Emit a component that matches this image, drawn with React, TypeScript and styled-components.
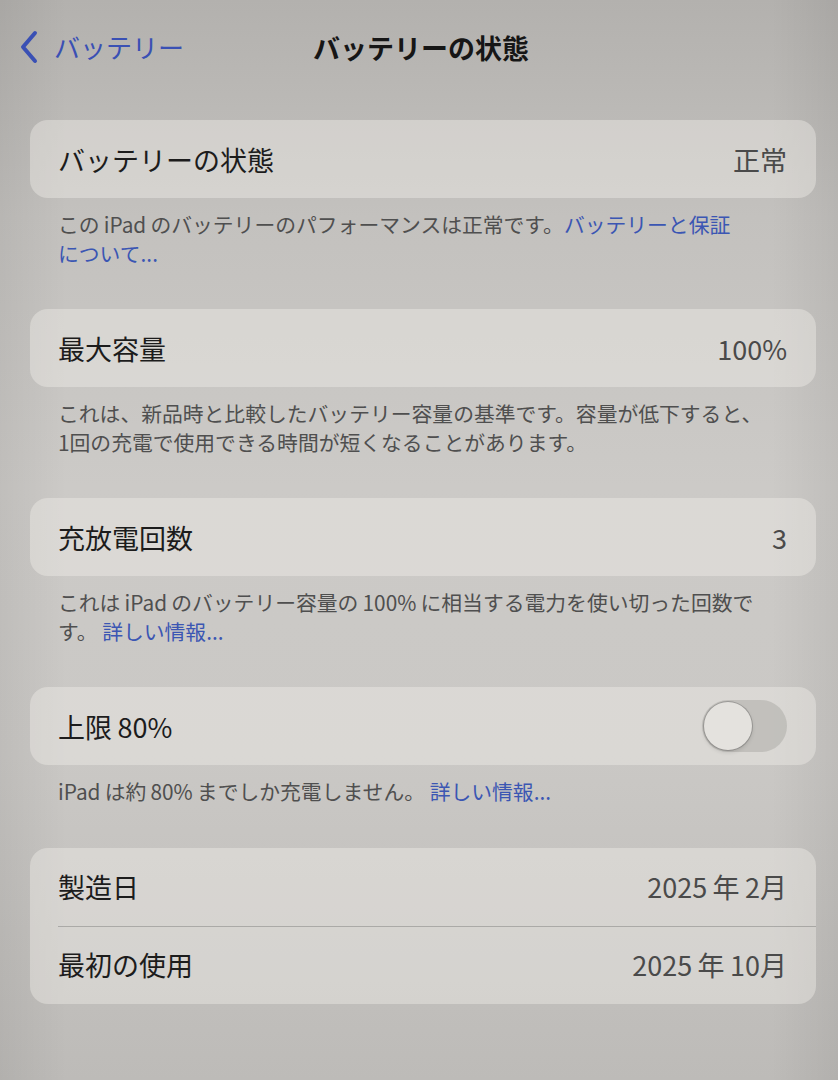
import React, { useState } from "react";
import styled, { createGlobalStyle } from "styled-components";

const GlobalStyle = createGlobalStyle`
  html, body {
    margin: 0;
    padding: 0;
  }
  body {
    font-family: "Noto Sans CJK JP", "Noto Sans", "Liberation Sans", sans-serif;
    background: #c4c2bf;
  }
`;

const Screen = styled.div`
  min-height: 1080px;
  background:
    linear-gradient(90deg, rgba(0, 0, 0, 0.06) 0%, rgba(0, 0, 0, 0) 8%, rgba(0, 0, 0, 0) 92%, rgba(0, 0, 0, 0.06) 100%),
    linear-gradient(180deg, #b3b1ae 0%, #c3c1be 20%, #cccac7 45%, #cac8c5 70%, #bdbbb8 100%);
  padding: 0 22px 0 30px;
  box-sizing: border-box;
`;

const NavBar = styled.div`
  height: 120px;
  display: grid;
  grid-template-columns: 1fr auto 1fr;
  align-items: start;
  padding-top: 28px;
  margin-left: -30px;
  box-sizing: border-box;
`;

const BackButton = styled.div`
  display: flex;
  align-items: center;
  gap: 14px;
  padding-left: 18px;
  color: #3a50b4;
  font-size: 26px;
`;

const Title = styled.div`
  font-size: 27px;
  font-weight: 700;
  color: #161616;
  padding-left: 26px;
`;

const Card = styled.div`
  background: rgba(240, 238, 234, 0.42);
  border-radius: 18px;
  overflow: hidden;
`;

const Row = styled.div`
  height: 78px;
  display: flex;
  align-items: center;
  justify-content: space-between;
  padding: 0 29px 0 28px;
  position: relative;
  & + &::before {
    content: "";
    position: absolute;
    top: 0;
    left: 28px;
    right: 0;
    height: 1px;
    background: rgba(60, 60, 60, 0.28);
  }
`;

const Label = styled.span`
  font-size: 27px;
  color: #1c1c1c;
`;

const Value = styled.span`
  font-size: 27px;
  color: #4a4a4a;
`;

const Footer = styled.div`
  padding: 12px 28px 42px 28px;
  font-size: 20.8px;
  line-height: 28.5px;
  color: #4f4f4f;
`;

const Link = styled.span`
  color: #3b56b3;
`;

const Toggle = styled.div<{ $on: boolean }>`
  width: 85px;
  height: 52px;
  border-radius: 26px;
  background: ${(p) => (p.$on ? "#34c759" : "rgba(150, 148, 144, 0.35)")};
  display: flex;
  align-items: center;
  justify-content: ${(p) => (p.$on ? "flex-end" : "flex-start")};
  padding: 2px;
  box-sizing: border-box;
  cursor: pointer;
`;

const Knob = styled.div`
  width: 48px;
  height: 48px;
  border-radius: 50%;
  background: #e4e2de;
  box-shadow: 0 0 0 1px rgba(90, 90, 90, 0.35), 0 2px 4px rgba(0, 0, 0, 0.15);
`;

const Chevron = () => (
  <svg width="22" height="34" viewBox="0 0 22 34">
    <polyline
      points="17,3 5,17 17,31"
      fill="none"
      stroke="#3a50b4"
      strokeWidth="4"
      strokeLinecap="round"
      strokeLinejoin="round"
    />
  </svg>
);

// thin gap that iOS puts between latin and kana
const G = "\u2009";

const App = () => {
  const [limit, setLimit] = useState(false);

  return (
    <>
      <GlobalStyle />
      <Screen>
        <NavBar>
          <BackButton>
            <Chevron />
            <span>バッテリー</span>
          </BackButton>
          <Title>バッテリーの状態</Title>
          <div />
        </NavBar>

        <Card>
          <Row>
            <Label>バッテリーの状態</Label>
            <Value>正常</Value>
          </Row>
        </Card>
        <Footer>
          この{G}iPad{G}のバッテリーのパフォーマンスは正常です。<Link>バッテリーと保証</Link>
          <br />
          <Link>について...</Link>
        </Footer>

        <Card>
          <Row>
            <Label>最大容量</Label>
            <Value>100%</Value>
          </Row>
        </Card>
        <Footer>
          これは、新品時と比較したバッテリー容量の基準です。容量が低下すると、
          <br />
          1回の充電で使用できる時間が短くなることがあります。
        </Footer>

        <Card>
          <Row>
            <Label>充放電回数</Label>
            <Value>3</Value>
          </Row>
        </Card>
        <Footer>
          これは{G}iPad{G}のバッテリー容量の{G}100%{G}に相当する電力を使い切った回数で
          <br />
          す。 <Link>詳しい情報...</Link>
        </Footer>

        <Card>
          <Row>
            <Label>上限{G}80%</Label>
            <Toggle $on={limit} onClick={() => setLimit(!limit)}>
              <Knob />
            </Toggle>
          </Row>
        </Card>
        <Footer>
          iPad{G}は約{G}80%{G}までしか充電しません。 <Link>詳しい情報...</Link>
        </Footer>

        <Card>
          <Row>
            <Label>製造日</Label>
            <Value>2025{G}年{G}2月</Value>
          </Row>
          <Row>
            <Label>最初の使用</Label>
            <Value>2025{G}年{G}10月</Value>
          </Row>
        </Card>
      </Screen>
    </>
  );
};

export default App;
